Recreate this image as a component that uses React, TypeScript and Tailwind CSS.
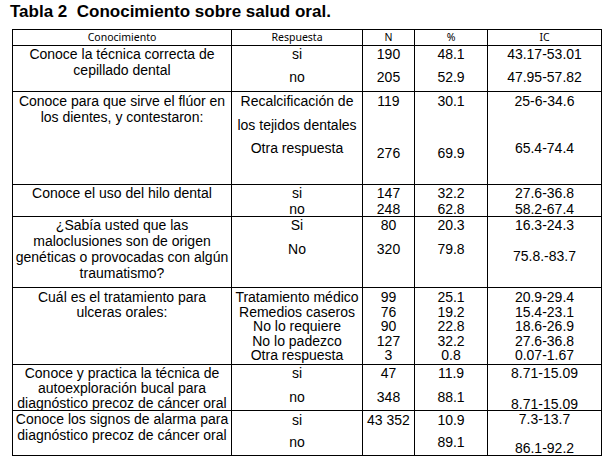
import React from "react";

type Line = { t: string; cls?: string };
type Cell = { lines: Line[]; cls?: string; lead?: string };

const rows: Cell[][] = [
  // Row 1
  [
    { cls: "pt-0", lines: [{ t: "Conoce la técnica correcta de" }, { t: "cepillado dental" }] },
    { cls: "pt-0", lines: [{ t: "si" }, { t: "no", cls: "mt-[7px]" }] },
    { cls: "pt-0", lines: [{ t: "190" }, { t: "205", cls: "mt-[7px]" }] },
    { cls: "pt-0", lines: [{ t: "48.1" }, { t: "52.9", cls: "mt-[7px]" }] },
    { cls: "pt-0", lines: [{ t: "43.17-53.01" }, { t: "47.95-57.82", cls: "mt-[7px]" }] },
  ],
  // Row 2
  [
    { cls: "pt-[1px]", lines: [{ t: "Conoce para que sirve el flúor en" }, { t: "los dientes, y contestaron:" }] },
    {
      cls: "pt-[1px]",
      lines: [
        { t: "Recalcificación de" },
        { t: "los tejidos dentales", cls: "mt-[8px]" },
        { t: "Otra respuesta", cls: "mt-[7px]" },
      ],
    },
    { cls: "pt-[1px]", lines: [{ t: "119" }, { t: "276", cls: "mt-[36px]" }] },
    { cls: "pt-[1px]", lines: [{ t: "30.1" }, { t: "69.9", cls: "mt-[36px]" }] },
    { cls: "pt-[1px]", lines: [{ t: "25-6-34.6" }, { t: "65.4-74.4", cls: "mt-[31px]" }] },
  ],
  // Row 3
  [
    { cls: "pt-0", lines: [{ t: "Conoce el uso del hilo dental" }] },
    { cls: "pt-0", lines: [{ t: "si" }, { t: "no" }] },
    { cls: "pt-0", lines: [{ t: "147" }, { t: "248" }] },
    { cls: "pt-0", lines: [{ t: "32.2" }, { t: "62.8" }] },
    { cls: "pt-0", lines: [{ t: "27.6-36.8" }, { t: "58.2-67.4" }] },
  ],
  // Row 4
  [
    {
      cls: "pt-0",
      lines: [
        { t: "¿Sabía usted que las" },
        { t: "maloclusiones son de origen" },
        { t: "genéticas o provocadas con algún" },
        { t: "traumatismo?" },
      ],
    },
    { cls: "pt-0", lines: [{ t: "Si" }, { t: "No", cls: "mt-[8px]" }] },
    { cls: "pt-0", lines: [{ t: "80" }, { t: "320", cls: "mt-[8px]" }] },
    { cls: "pt-0", lines: [{ t: "20.3" }, { t: "79.8", cls: "mt-[8px]" }] },
    { cls: "pt-0", lines: [{ t: "16.3-24.3" }, { t: "75.8.-83.7", cls: "mt-[15px]" }] },
  ],
  // Row 5
  [
    {
      cls: "pt-[2px]",
      lead: "leading-[15px]",
      lines: [{ t: "Cuál es el tratamiento para" }, { t: "ulceras orales:" }],
    },
    {
      cls: "pt-[2px]",
      lead: "leading-[14.5px]",
      lines: [
        { t: "Tratamiento médico" },
        { t: "Remedios caseros" },
        { t: "No lo requiere" },
        { t: "No lo padezco" },
        { t: "Otra respuesta" },
      ],
    },
    {
      cls: "pt-[2px]",
      lead: "leading-[14.5px]",
      lines: [{ t: "99" }, { t: "76" }, { t: "90" }, { t: "127" }, { t: "3" }],
    },
    {
      cls: "pt-[2px]",
      lead: "leading-[14.5px]",
      lines: [{ t: "25.1" }, { t: "19.2" }, { t: "22.8" }, { t: "32.2" }, { t: "0.8" }],
    },
    {
      cls: "pt-[2px]",
      lead: "leading-[14.5px]",
      lines: [
        { t: "20.9-29.4" },
        { t: "15.4-23.1" },
        { t: "18.6-26.9" },
        { t: "27.6-36.8" },
        { t: "0.07-1.67" },
      ],
    },
  ],
  // Row 6
  [
    {
      cls: "pt-[1px]",
      lead: "leading-[15px]",
      lines: [
        { t: "Conoce y practica la técnica de" },
        { t: "autoexploración bucal para" },
        { t: "diagnóstico precoz de cáncer oral" },
      ],
    },
    { cls: "pt-0", lines: [{ t: "si" }, { t: "no", cls: "mt-[8px]" }] },
    { cls: "pt-0", lines: [{ t: "47" }, { t: "348", cls: "mt-[8px]" }] },
    { cls: "pt-0", lines: [{ t: "11.9" }, { t: "88.1", cls: "mt-[8px]" }] },
    { cls: "pt-0", lines: [{ t: "8.71-15.09" }, { t: "8.71-15.09", cls: "mt-[15px]" }] },
  ],
  // Row 7
  [
    {
      cls: "pt-0",
      lines: [{ t: "Conoce los signos de alarma para" }, { t: "diagnóstico precoz de cáncer oral" }],
    },
    { cls: "pt-[1px]", lines: [{ t: "si" }, { t: "no", cls: "mt-[6px]" }] },
    { cls: "pt-[1px]", lines: [{ t: "43 352" }] },
    { cls: "pt-[1px]", lines: [{ t: "10.9" }, { t: "89.1", cls: "mt-[6px]" }] },
    { cls: "pt-0", lines: [{ t: "7.3-13.7" }, { t: "86.1-92.2", cls: "mt-[13px]" }] },
  ],
];

const headers = ["Conocimiento", "Respuesta", "N", "%", "IC"];

export default function App() {
  return (
    <div className="w-[609px] h-[464px] bg-white text-black overflow-hidden">
      <div
        className="h-[29px] pl-[10px] pt-[2px] text-[17px] leading-[20px] font-bold whitespace-pre"
        style={{ fontFamily: '"Liberation Sans", Arial, sans-serif' }}
      >
        {"Tabla 2  Conocimiento sobre salud oral."}
      </div>
      <div
        className="ml-[12px] w-[590px] grid grid-cols-[219px_131px_52px_73px_114px] grid-rows-[16px_46px_93px_32px_71px_77px_46px_45px] border-l border-t border-black"
        style={{ fontFamily: '"Liberation Sans", Arial, sans-serif' }}
      >
        {headers.map((h) => (
          <div
            key={h}
            className="border-r border-b border-black text-center text-[10.5px] leading-[15px]"
            style={{ fontFamily: '"Noto Sans", sans-serif' }}
          >
            {h}
          </div>
        ))}
        {rows.map((row, ri) =>
          row.map((cell, ci) => (
            <div
              key={`${ri}-${ci}`}
              className={`border-r border-b border-black text-center text-[14px] overflow-hidden whitespace-nowrap ${cell.lead ?? "leading-[16px]"} ${cell.cls ?? ""}`}
            >
              {cell.lines.map((l, li) => (
                <div key={li} className={l.cls ?? ""}>
                  {l.t}
                </div>
              ))}
            </div>
          ))
        )}
      </div>
    </div>
  );
}
